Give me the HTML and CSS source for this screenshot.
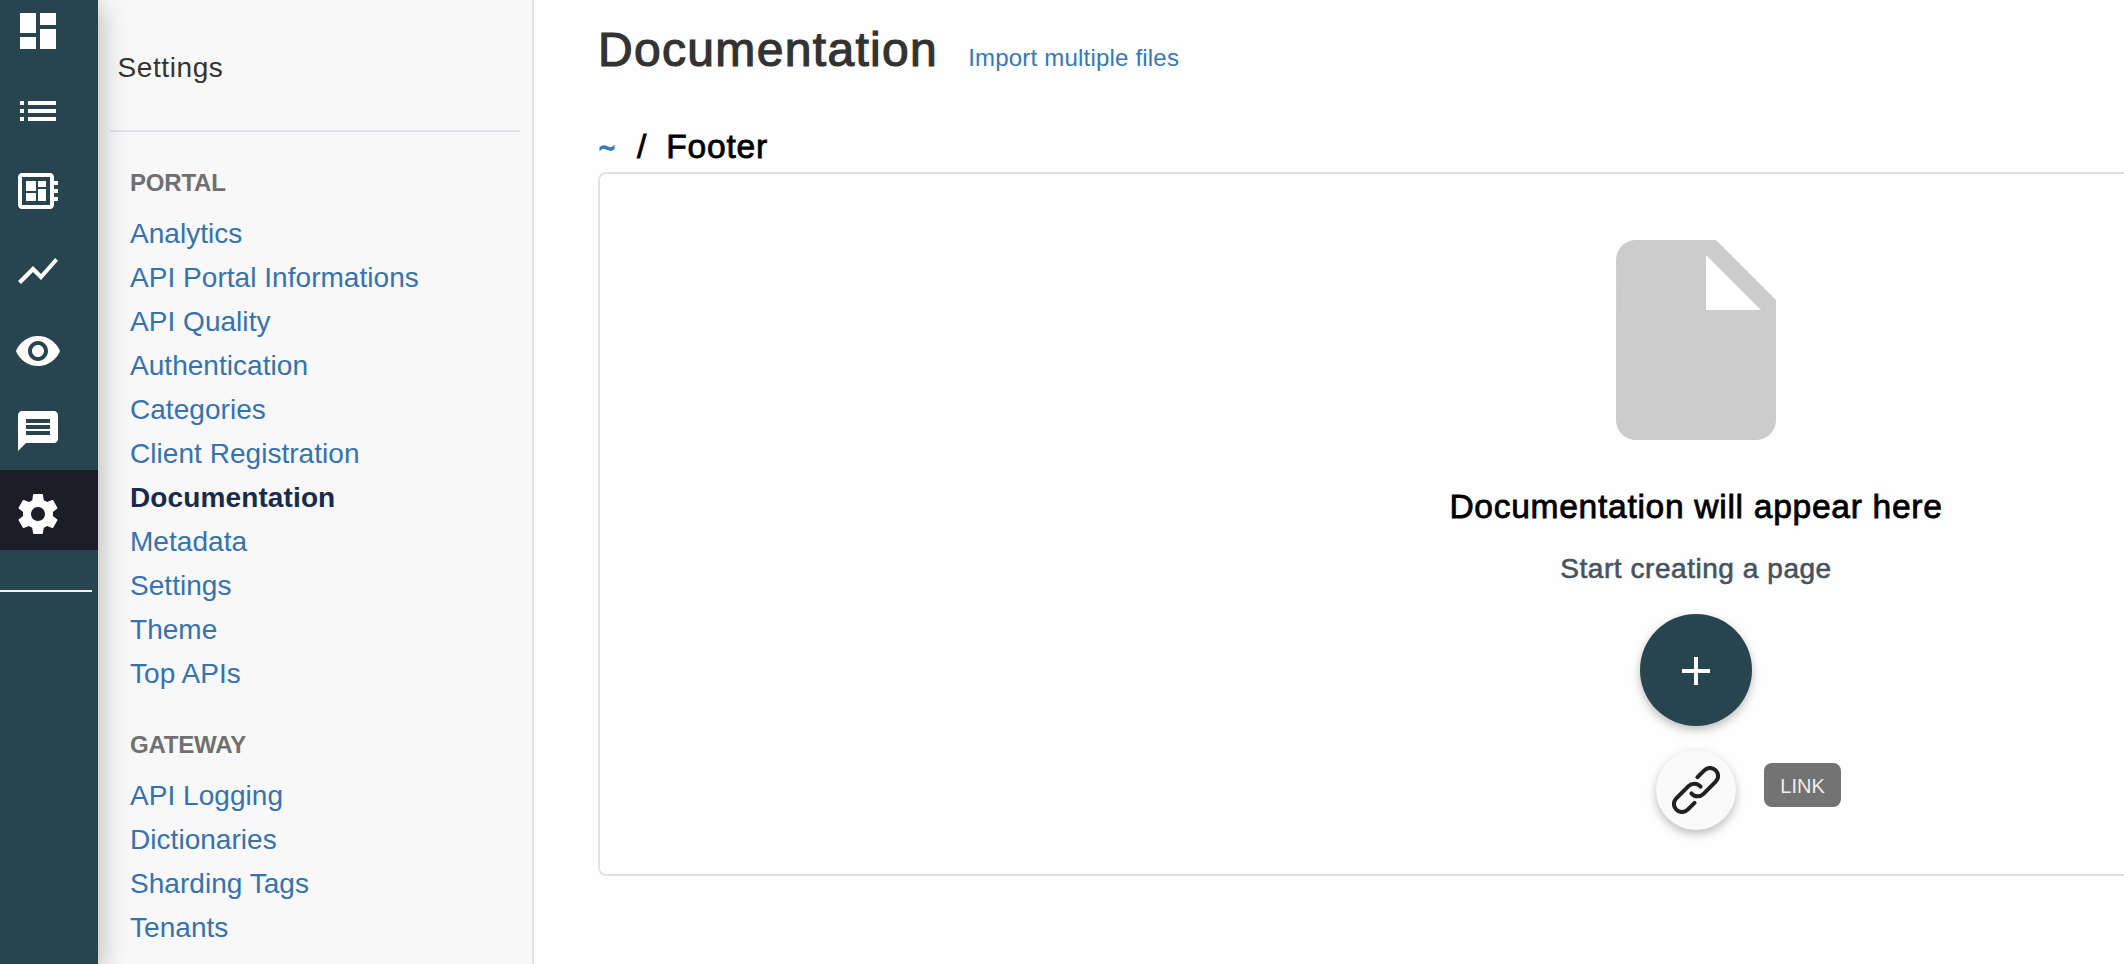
FILE: index.html
```html
<!DOCTYPE html>
<html lang="en">
<head>
<meta charset="utf-8">
<title>Documentation</title>
<link rel="stylesheet" href="styles.css">
</head>
<body>
<div class="app">
  <nav class="rail">
    <a class="rail-item"><svg viewBox="0 0 24 24"><path d="M3 13h8V3H3v10zm0 8h8v-6H3v6zm10 0h8V11h-8v10zm0-18v6h8V3h-8z"/></svg></a>
    <a class="rail-item"><svg viewBox="0 0 24 24"><path d="M3 13h2v-2H3v2zm0 4h2v-2H3v2zm0-8h2V7H3v2zm4 4h14v-2H7v2zm0 4h14v-2H7v2zM7 7v2h14V7H7z"/></svg></a>
    <a class="rail-item"><svg viewBox="0 0 24 24"><path d="M22 9V7h-2V5c0-1.1-.9-2-2-2H4c-1.1 0-2 .9-2 2v14c0 1.1.9 2 2 2h14c1.1 0 2-.9 2-2v-2h2v-2h-2v-2h2v-2h-2V9h2zm-4 10H4V5h14v14zM6 13h5v4H6zM12 7h4v3h-4zM6 7h5v5H6zM12 11h4v6h-4z"/></svg></a>
    <a class="rail-item"><svg viewBox="0 0 24 24"><path d="M3.5 18.49l6-6.01 4 4L22 6.92l-1.41-1.41-7.09 7.97-4-4L2 16.99z"/></svg></a>
    <a class="rail-item"><svg viewBox="0 0 24 24"><path d="M12 4.5C7 4.5 2.73 7.61 1 12c1.73 4.39 6 7.5 11 7.5s9.27-3.11 11-7.5c-1.73-4.39-6-7.5-11-7.5zM12 17c-2.76 0-5-2.24-5-5s2.24-5 5-5 5 2.24 5 5-2.24 5-5 5zm0-8c-1.66 0-3 1.34-3 3s1.34 3 3 3 3-1.34 3-3-1.34-3-3-3z"/></svg></a>
    <a class="rail-item"><svg viewBox="0 0 24 24"><path d="M20 2H4c-1.1 0-1.99.9-1.99 2L2 22l4-4h14c1.1 0 2-.9 2-2V4c0-1.1-.9-2-2-2zm-2 12H6v-2h12v2zm0-3H6V9h12v2zm0-3H6V6h12v2z"/></svg></a>
    <a class="rail-item active"><svg viewBox="0 0 24 24"><path d="M19.43 12.98c.04-.32.07-.64.07-.98s-.03-.66-.07-.98l2.11-1.65c.19-.15.24-.42.12-.64l-2-3.46c-.12-.22-.39-.3-.61-.22l-2.49 1c-.52-.4-1.08-.73-1.69-.98l-.38-2.65C14.46 2.18 14.25 2 14 2h-4c-.25 0-.46.18-.49.42l-.38 2.65c-.61.25-1.17.59-1.69.98l-2.49-1c-.23-.09-.49 0-.61.22l-2 3.46c-.13.22-.07.49.12.64l2.11 1.65c-.04.32-.07.65-.07.98s.03.66.07.98l-2.11 1.65c-.19.15-.24.42-.12.64l2 3.46c.12.22.39.3.61.22l2.49-1c.52.4 1.08.73 1.69.98l.38 2.65c.03.24.24.42.49.42h4c.25 0 .46-.18.49-.42l.38-2.65c.61-.25 1.17-.59 1.69-.98l2.49 1c.23.09.49 0 .61-.22l2-3.46c.12-.22.07-.49-.12-.64l-2.11-1.65zM12 15.5c-1.93 0-3.5-1.57-3.5-3.5s1.57-3.5 3.5-3.5 3.5 1.57 3.5 3.5-1.57 3.5-3.5 3.5z"/></svg></a>
    <div class="rail-line"></div>
  </nav>

  <aside class="sidebar">
    <div class="sidebar-title">Settings</div>
    <section class="group">
      <h2>PORTAL</h2>
      <a>Analytics</a>
      <a>API Portal Informations</a>
      <a>API Quality</a>
      <a>Authentication</a>
      <a>Categories</a>
      <a>Client Registration</a>
      <a class="current">Documentation</a>
      <a>Metadata</a>
      <a>Settings</a>
      <a>Theme</a>
      <a>Top APIs</a>
    </section>
    <section class="group">
      <h2>GATEWAY</h2>
      <a>API Logging</a>
      <a>Dictionaries</a>
      <a>Sharding Tags</a>
      <a>Tenants</a>
    </section>
  </aside>

  <main class="main">
    <header class="heading">
      <h1>Documentation</h1>
      <a class="import">Import multiple files</a>
    </header>
    <div class="crumbs"><a>~</a><span>/</span><span>Footer</span></div>
    <section class="panel">
      <svg class="file" viewBox="0 0 24 24"><path d="M6 2c-1.1 0-1.99.9-1.99 2L4 20c0 1.1.89 2 1.99 2H18c1.1 0 2-.9 2-2V8l-6-6H6zm7 7V3.5L18.5 9H13z"/></svg>
      <div class="empty-title">Documentation will appear here</div>
      <div class="empty-text">Start creating a page</div>
      <button class="fab"><svg viewBox="0 0 24 24"><path d="M19 13h-6v6h-2v-6H5v-2h6V5h2v6h6v2z"/></svg></button>
      <button class="fab-mini">
        <svg viewBox="0 0 48 48"><path d="M25.5 11.2 32.3 4.3A8 8 0 0 1 43.7 15.7L31.5 27.9A8 8 0 0 1 19.5 27.4"/><path d="M22.5 36.8 15.7 43.7A8 8 0 0 1 4.3 32.3L16.5 20.1A8 8 0 0 1 28.5 20.6"/></svg>
        <span class="tip">LINK</span>
      </button>
    </section>
  </main>
</div>
</body>
</html>
```

FILE: styles.css
```css
* { box-sizing: border-box; }
body {
  margin: 0;
  overflow: hidden;
  background: #fefefe;
  font-family: "Liberation Sans", Arial, sans-serif;
}
h1, h2 { margin: 0; }
.app { display: flex; height: 964px; overflow: hidden; }

.rail {
  flex: none;
  width: 98px;
  padding-top: 7px;
  background: #28444f;
  box-shadow: 2px 6px 26px rgba(0, 0, 0, .28);
  z-index: 2;
}
.rail-item { display: block; height: 80px; padding-left: 14px; }
.rail-item svg { display: block; width: 48px; height: 48px; fill: #fefefe; }
.rail-item.active { margin-top: -17px; padding-top: 20px; background: #1c1d26; }
.rail-line { width: 92px; height: 2px; margin-top: 40px; background: #f2f2f2; }

.sidebar {
  flex: none;
  width: 436px;
  background: #f8f8f8;
  border-right: 2px solid #dfe3e7;
}
.sidebar-title {
  height: 132px;
  margin: 0 12px 37px;
  padding: 52px 0 0 7.5px;
  border-bottom: 2px solid #dfe3e7;
  color: #333;
  font-size: 28px;
  line-height: 32px;
  letter-spacing: .6px;
}
.group { display: flex; flex-direction: column; margin-bottom: 35px; padding-left: 32px; }
.group h2 { margin: 0 0 15px; color: #707070; font-size: 24px; line-height: 28px; letter-spacing: -.2px; }
.group a { color: #3572b0; font-size: 28px; line-height: 44px; letter-spacing: .04px; }
.group .current { color: #172b4d; font-weight: 700; letter-spacing: .12px; }

.main { flex: none; width: 2260px; padding: 22px 0 0 64px; }
.heading { display: flex; align-items: baseline; gap: 30px; }
.heading h1 {
  color: #333;
  font-size: 48px;
  font-weight: 400;
  line-height: 56px;
  letter-spacing: 1.33px;
  -webkit-text-stroke: 1.2px #333;
}
.import { color: #337ab7; font-size: 24px; letter-spacing: .2px; }
.crumbs {
  display: flex;
  align-items: baseline;
  gap: 19px;
  height: 40px;
  margin: 49px 0 5px;
  padding-left: 1px;
  color: #000;
  font-size: 33.6px;
  line-height: 40px;
  letter-spacing: .8px;
  -webkit-text-stroke: .8px currentColor;
}
.crumbs a {
  width: 19px;
  color: #337ab7;
  font-size: 27px;
  -webkit-text-stroke-width: 1.6px;
}

.panel {
  display: flex;
  flex-direction: column;
  align-items: center;
  width: 2196px;
  height: 704px;
  padding-top: 46px;
  border: 2px solid #dfe3e7;
  border-radius: 8px;
}
.file { flex: none; width: 240px; height: 240px; fill: #ccc; }
.empty-title {
  margin-top: 27px;
  color: #000;
  font-size: 33.6px;
  line-height: 40px;
  letter-spacing: .7px;
  -webkit-text-stroke: .8px #000;
}
.empty-text {
  margin-top: 26px;
  color: #46535f;
  font-size: 28px;
  line-height: 32px;
  letter-spacing: .55px;
  -webkit-text-stroke: .6px #46535f;
}
.fab, .fab-mini {
  display: flex;
  flex: none;
  align-items: center;
  justify-content: center;
  padding: 0;
  border: 0;
  border-radius: 50%;
  box-shadow: 0 4px 10px rgba(0, 0, 0, .26);
}
.fab { width: 112px; height: 112px; margin-top: 29px; padding-top: 2px; background: #28444f; }
.fab svg { width: 48px; height: 48px; fill: #fff; }
.fab-mini { position: relative; width: 80px; height: 80px; margin-top: 24px; background: #fafafa; }
.fab-mini svg { width: 48px; height: 48px; fill: none; stroke: #212121; stroke-width: 4; stroke-linecap: round; }
.tip {
  position: absolute;
  left: 108px;
  top: 13px;
  width: 77px;
  height: 44px;
  border-radius: 8px;
  background: #737373;
  color: #eee;
  font-family: "Liberation Sans", Arial, sans-serif;
  font-size: 20px;
  line-height: 46px;
  text-align: center;
}
```
